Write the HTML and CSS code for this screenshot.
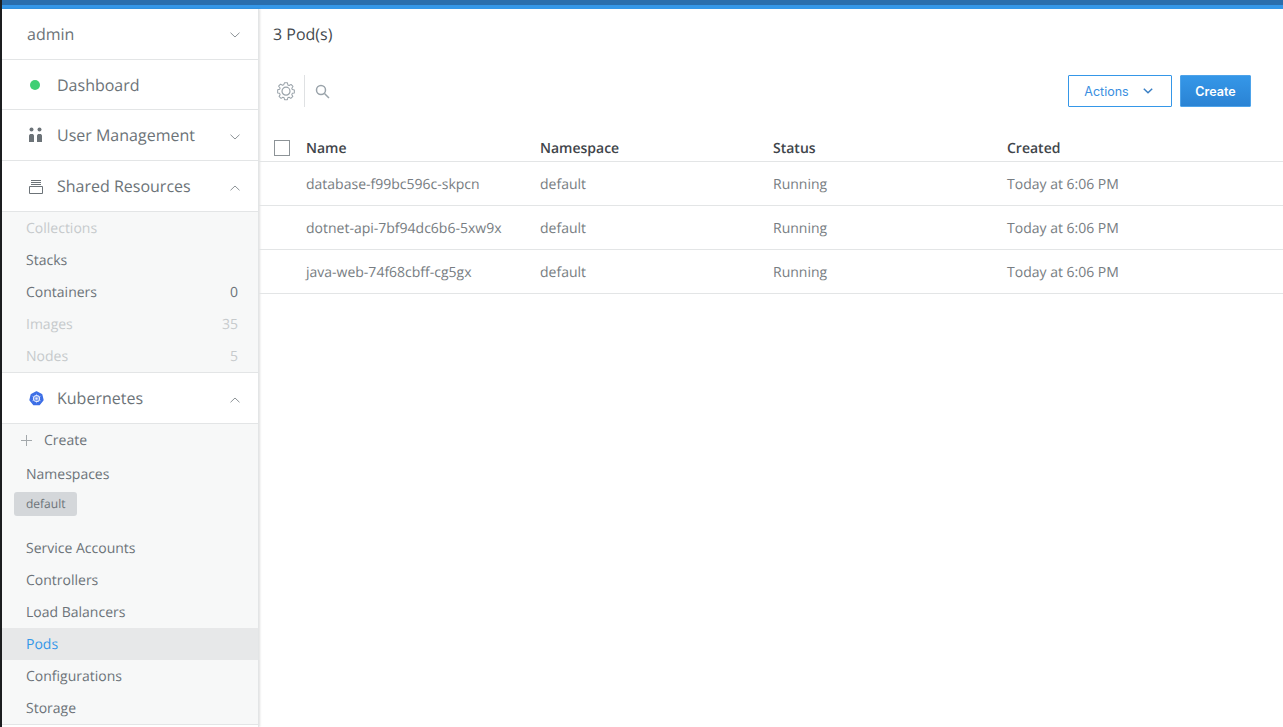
FILE: index.html
```html
<!DOCTYPE html>
<html lang="en">
<head>
<meta charset="utf-8">
<title>Pods</title>
<link rel="stylesheet" href="styles.css">
</head>
<body>
<div class="topbar"><div class="topbar-dark"></div><div class="topbar-light"></div></div>
<div class="shell">
  <div class="edge"></div>
  <nav class="sidebar">
    <div class="nav-head nav-user">
      <span class="nav-title">admin</span>
      <svg class="chev" viewBox="0 0 10 6"><path d="M.5.7 5 5 9.500.7"/></svg>
    </div>
    <div class="nav-head nav-dash">
      <span class="nav-icon"><span class="dot"></span></span>
      <span class="nav-title">Dashboard</span>
    </div>
    <div class="nav-head nav-tall">
      <span class="nav-icon">
        <svg class="ico" width="14" height="16" viewBox="0 0 14 16"><circle cx="2.500" cy="2.500" r="2"/><circle cx="10.500" cy="2.500" r="2"/><path d="M1 7h3l1 1.500V15H0V8.500ZM9 7h3l1 1.500V15H8V8.500Z"/></svg>
      </span>
      <span class="nav-title">User Management</span>
      <svg class="chev" viewBox="0 0 10 6"><path d="M.5.7 5 5 9.500.7"/></svg>
    </div>
    <div class="nav-head nav-tall">
      <span class="nav-icon">
        <svg class="ico-line" width="14" height="16" viewBox="0 0 14 16"><path d="M2 2.500h10M2 4.500h10M2 6.500h10M.5 8.500h13v7H.5z"/></svg>
      </span>
      <span class="nav-title">Shared Resources</span>
      <svg class="chev up" viewBox="0 0 10 6"><path d="M.5.7 5 5 9.500.7"/></svg>
    </div>
    <div class="sub sub-shared">
      <a class="sub-item muted">Collections</a>
      <a class="sub-item">Stacks</a>
      <a class="sub-item">Containers<span class="count">0</span></a>
      <a class="sub-item muted">Images<span class="count">35</span></a>
      <a class="sub-item muted">Nodes<span class="count">5</span></a>
    </div>
    <div class="nav-head nav-k8s">
      <span class="nav-icon">
        <svg width="15" height="15" viewBox="0 0 16 16"><path class="k8s-bg" d="M8 1 13.500 3.700 14.900 9.600 11 14.500H5L1.100 9.600 2.500 3.700Z"/><g class="k8s-spokes"><path d="M8 3v10M3.500 5.500l9 5M12.500 5.500l-9 5"/></g><circle class="k8s-ring" cx="8" cy="8" r="3.300"/><circle class="k8s-core" cx="8" cy="8" r="1.200"/></svg>
      </span>
      <span class="nav-title">Kubernetes</span>
      <svg class="chev up" viewBox="0 0 10 6"><path d="M.5.7 5 5 9.500.7"/></svg>
    </div>
    <div class="sub sub-k8s">
      <a class="sub-item create">
        <svg class="plus" width="11" height="11" viewBox="0 0 11 11"><path d="M5.500 0v11M0 5.500h11"/></svg>
        Create
      </a>
      <div class="ns-label">Namespaces</div>
      <div class="ns-pill-row"><span class="ns-pill">default</span></div>
      <a class="sub-item">Service Accounts</a>
      <a class="sub-item">Controllers</a>
      <a class="sub-item">Load Balancers</a>
      <a class="sub-item active">Pods</a>
      <a class="sub-item">Configurations</a>
      <a class="sub-item">Storage</a>
    </div>
  </nav>
  <main class="main">
    <h1 class="page-title">3 Pod(s)</h1>
    <div class="toolbar">
      <div class="tools">
        <svg class="gear" width="20" height="20" viewBox="0 0 20 20"><path d="M8.300 1.200h3.400l.5 2.500 1.500.7 2.200-1.300 2.300 2.400-1.400 2.100.6 1.500 2.400.6v3.400l-2.400.5-.6 1.500 1.300 2.100-2.400 2.300-2.100-1.300-1.500.6-.5 2.300H8.300l-.5-2.300-1.500-.6-2.100 1.300-2.400-2.300 1.300-2.100-.6-1.500-2.300-.5V9.400l2.300-.6.600-1.500L1.300 5.200l2.300-2.400 2.200 1.300 1.500-.7Z" transform="translate(1.500 .8) scale(.85)"/><circle cx="10" cy="10.200" r="4"/></svg>
        <span class="divider"></span>
        <svg class="search" width="16" height="16" viewBox="0 0 16 16"><circle cx="6" cy="6" r="4.500"/><path d="M9.500 9.500l4.500 4.500"/></svg>
      </div>
      <div class="actions">
        <button class="btn btn-outline">Actions<svg class="btn-chev" width="10" height="6" viewBox="0 0 10 6"><path d="M.8.8 5 4.800 9.200.8"/></svg></button>
        <button class="btn btn-primary">Create</button>
      </div>
    </div>
    <div class="table">
      <div class="row row-head">
        <span class="cell-check"><span class="checkbox"></span></span>
        <span>Name</span><span>Namespace</span><span>Status</span><span>Created</span>
      </div>
      <div class="row">
        <span class="cell-check"></span>
        <span>database-f99bc596c-skpcn</span><span>default</span><span>Running</span><span>Today at 6:06 PM</span>
      </div>
      <div class="row">
        <span class="cell-check"></span>
        <span>dotnet-api-7bf94dc6b6-5xw9x</span><span>default</span><span>Running</span><span>Today at 6:06 PM</span>
      </div>
      <div class="row">
        <span class="cell-check"></span>
        <span>java-web-74f68cbff-cg5gx</span><span>default</span><span>Running</span><span>Today at 6:06 PM</span>
      </div>
    </div>
  </main>
</div>
</body>
</html>
```
FILE: styles.css
```css
* { box-sizing: border-box; }
html, body { height: 100%; }
body {
  margin: 0;
  overflow: hidden;
  display: flex;
  flex-direction: column;
  background: #fff;
  color: #6c7378;
  font-family: "Open Sans", sans-serif;
  font-size: 14px;
  text-rendering: geometricPrecision;
}
.topbar { flex: none; border-left: 2px solid #1c1e20; }
.topbar-dark { height: 5px; background: #2a6ead; }
.topbar-light { height: 4px; background: #3597e8; }
.shell { flex: 1; display: flex; min-height: 0; }
.edge { flex: none; width: 2px; background: #1c1e20; }
.sidebar {
  flex: none;
  width: 257px;
  height: 718px;
  background: #fff;
  border-right: 1px solid #e3e5e6;
  box-shadow: 1px 0 2px rgba(0, 0, 0, .12);
}
.nav-head {
  display: flex;
  align-items: center;
  height: 51px;
  padding-left: 27px;
  padding-right: 18px;
  border-bottom: 1px solid #e3e5e6;
}
.nav-user { padding-left: 25px; padding-bottom: 1px; }
.nav-dash { height: 50px; }
.nav-k8s { border-top: 1px solid #e3e5e6; height: 52px; }
.nav-icon {
  flex: none;
  width: 28px;
  display: flex;
  align-items: center;
}
.nav-title { flex: 1; font-size: 16px; color: #6c7378; }
.dot {
  width: 10px;
  height: 10px;
  margin-left: 1px;
  border-radius: 50%;
  background: #3ecf74;
}
.ico { fill: #6c7378; }
.ico-line { fill: none; stroke: #6c7378; stroke-width: 1; }
.chev {
  flex: none;
  width: 10px;
  height: 6px;
  margin-top: 3px;
  fill: none;
  stroke: #8d9397;
  stroke-width: 1;
}
.chev.up { transform: scaleY(-1); }
.k8s-bg { fill: #3c6ee6; stroke: #3c6ee6; stroke-width: 1.400; stroke-linejoin: round; }
.k8s-spokes { fill: none; stroke: #a9c0f5; stroke-width: .8; }
.k8s-ring { fill: #7f9ff0; stroke: #e6edfc; stroke-width: 1.100; }
.k8s-core { fill: #e6edfc; }
.sub { background: #f7f8f8; }
.sub-item {
  display: flex;
  align-items: center;
  height: 32px;
  padding: 0 20px 0 24px;
  color: #6c7378;
}
.sub-item.muted { color: #c6cacc; }
.sub-item.active { background: #e7e8e9; color: #3597e8; }
.count { margin-left: auto; }
.sub-k8s { border-bottom: 1px solid #e3e5e6; }
.create { gap: 12px; padding-left: 19px; }
.plus { stroke: #a3a8ab; stroke-width: 1; }
.ns-label { height: 36px; padding: 9px 0 0 24px; line-height: 20px; }
.ns-pill-row { height: 40px; padding-left: 12px; }
.ns-pill {
  display: inline-block;
  width: 63px;
  height: 24px;
  border-radius: 3px;
  background: #d4d7da;
  padding-left: 12px;
  font-size: 12px;
  line-height: 24px;
}
.main { flex: 1; min-width: 0; }
.page-title {
  margin: 0;
  height: 50px;
  padding-left: 14px;
  font-size: 16px;
  font-weight: 400;
  line-height: 50px;
  color: #444a4f;
}
.toolbar {
  display: flex;
  justify-content: space-between;
  align-items: center;
  height: 32px;
  margin-top: 16px;
  padding: 0 32px 0 17px;
}
.tools { display: flex; align-items: center; }
.gear { fill: none; stroke: #9aa3aa; stroke-width: 1.200; stroke-linejoin: round; }
.search { fill: none; stroke: #9aa3aa; stroke-width: 1.500; margin-top: 2px; }
.divider { width: 1px; height: 32px; margin: 0 10px 0 8px; background: #dfe1e3; }
.actions { display: flex; gap: 8px; }
.btn {
  height: 32px;
  border-radius: 1px;
  font-family: "Inter", "Open Sans", sans-serif;
  font-size: 12.500px;
  padding: 0;
}
.btn-outline {
  display: flex;
  align-items: center;
  justify-content: center;
  gap: 14px;
  width: 104px;
  padding-right: 3px;
  background: #fff;
  border: 1px solid #3597e8;
  color: #3a8ee0;
}
.btn-chev { fill: none; stroke: #3a7fc4; stroke-width: 1.500; }
.btn-primary {
  width: 71px;
  border: 1px solid #4da3ea;
  background: linear-gradient(#3597e8, #2a83d4);
  color: #fff;
  font-weight: 600;
}
.table { margin-top: 23px; }
.row {
  display: grid;
  grid-template-columns: 47px 234px 233px 234px 1fr;
  align-items: center;
  height: 44px;
  padding-top: 1px;
  border-bottom: 1px solid #e3e5e6;
  color: #777d82;
}
.row-head {
  height: 32px;
  color: #3f454a;
  font-weight: 600;
  font-size: 14px;
  padding-top: 5px;
}
.cell-check { padding-left: 15px; display: flex; }
.checkbox {
  width: 16px;
  height: 16px;
  border: 1px solid #8d9397;
  background: #fff;
}
```
